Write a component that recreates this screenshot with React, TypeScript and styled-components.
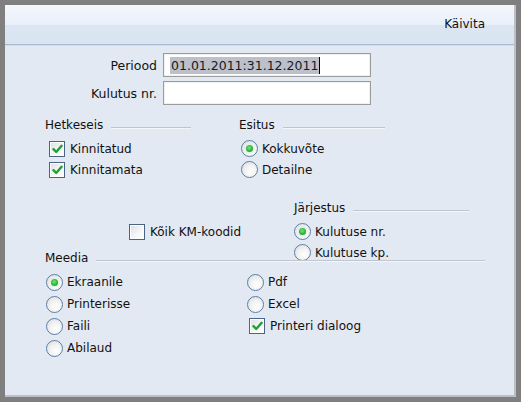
import { createGlobalStyle, styled } from 'styled-components';

const GlobalStyle = createGlobalStyle`
  html, body {
    margin: 0;
    padding: 0;
  }
  body {
    font-family: "DejaVu Sans", "Liberation Sans", sans-serif;
    font-size: 12px;
    color: #111;
  }
`;

const CheckIcon = () => (
  <svg width="11" height="10" viewBox="0 0 11 10">
    <path d="M1.5 5.2 L4.2 8 L9.6 1.8" fill="none" stroke="#1fa22e" strokeWidth="2.4" strokeLinecap="round" strokeLinejoin="round" />
  </svg>
);

interface OptionProps {
  label: string;
  checked?: boolean;
}

const CheckOption = ({ label, checked }: OptionProps) => (
  <OptionRow>
    <CheckBox>{checked && <CheckIcon />}</CheckBox>
    <OptionText $gap={5}>{label}</OptionText>
  </OptionRow>
);

const RadioOption = ({ label, checked }: OptionProps) => (
  <OptionRow>
    <RadioCircle>{checked && <RadioDot />}</RadioCircle>
    <OptionText $gap={4}>{label}</OptionText>
  </OptionRow>
);

interface GroupProps {
  title: string;
  width: number;
  inset?: number;
  children: React.ReactNode;
}

const Group = ({ title, width, inset = 0, children }: GroupProps) => (
  <GroupBox $width={width}>
    <GroupHeading>
      <span>{title}</span>
      <HeadingLine />
    </GroupHeading>
    <GroupItems $inset={inset}>{children}</GroupItems>
  </GroupBox>
);

const App = () => {
  return (
    <>
      <GlobalStyle />
      <Window>
        <Panel>
          <Header>
            <HeaderTitle>Käivita</HeaderTitle>
          </Header>
          <Body>
            <Fields>
              <FieldLabel>Periood</FieldLabel>
              <TextField>
                <Selected>01.01.2011:31.12.2011</Selected>
                <Caret />
              </TextField>
              <FieldLabel>Kulutus nr.</FieldLabel>
              <TextField />
            </Fields>

            <TopGroups>
              <Group title="Hetkeseis" width={146} inset={4}>
                <CheckOption label="Kinnitatud" checked />
                <CheckOption label="Kinnitamata" checked />
              </Group>
              <Group title="Esitus" width={146} inset={2}>
                <RadioOption label="Kokkuvõte" checked />
                <RadioOption label="Detailne" />
              </Group>
            </TopGroups>

            <MiddleRow>
              <SingleCheck>
                <CheckOption label="Kõik KM-koodid" />
              </SingleCheck>
              <Group title="Järjestus" width={175}>
                <RadioOption label="Kulutuse nr." checked />
                <RadioOption label="Kulutuse kp." />
              </Group>
            </MiddleRow>

            <MediaSection>
              <Group title="Meedia" width={440} inset={1}>
                <MediaColumns>
                  <MediaColumn>
                    <RadioOption label="Ekraanile" checked />
                    <RadioOption label="Printerisse" />
                    <RadioOption label="Faili" />
                    <RadioOption label="Abilaud" />
                  </MediaColumn>
                  <MediaColumn>
                    <RadioOption label="Pdf" />
                    <RadioOption label="Excel" />
                    <ShiftedCheck>
                      <CheckOption label="Printeri dialoog" checked />
                    </ShiftedCheck>
                  </MediaColumn>
                </MediaColumns>
              </Group>
            </MediaSection>
          </Body>
        </Panel>
      </Window>
    </>
  );
};

const Window = styled.div`
  width: 521px;
  height: 402px;
  box-sizing: border-box;
  padding: 5px;
  background: #7f7f7f;
  display: flex;
`;

const Panel = styled.div`
  flex: 1;
  display: flex;
  flex-direction: column;
  background: #e3e9f2;
  border-right: 2px solid #bcc0c6;
  border-bottom: 2px solid #bcc0c6;
`;

const Header = styled.div`
  height: 40px;
  display: flex;
  align-items: center;
  justify-content: flex-end;
  padding: 0 29px 2px 0;
  box-sizing: border-box;
  background: linear-gradient(
    to bottom,
    #f3f7fd 0%,
    #e9f0f9 50%,
    #dce6f3 52%,
    #d9e4f2 100%
  );
  border-bottom: 1px solid #aab9cf;
  box-shadow: 0 1px 0 #d2dbe8;
`;

const HeaderTitle = styled.span`
  font-size: 12px;
  color: #111;
`;

const Body = styled.div`
  flex: 1;
  display: flex;
  flex-direction: column;
  padding: 8px 0 0 40px;
`;

const Fields = styled.div`
  display: grid;
  grid-template-columns: 112px 208px;
  column-gap: 6px;
  row-gap: 4px;
  align-items: center;
`;

const FieldLabel = styled.span`
  text-align: right;
  font-size: 12.5px;
`;

const TextField = styled.div`
  height: 24px;
  box-sizing: border-box;
  border: 1px solid #9c9c9c;
  box-shadow: inset 0 0 0 1px #f0f0f0;
  background: #fff;
  display: flex;
  align-items: center;
  padding-left: 6px;
  font-size: 12.5px;
`;

const Selected = styled.span`
  background: #bcc0cb;
  color: #1a1a1a;
  line-height: 17px;
  padding: 0 1px;
`;

const Caret = styled.span`
  width: 1px;
  height: 17px;
  background: #000;
`;

const TopGroups = styled.div`
  display: flex;
  gap: 48px;
  margin-top: 12px;
`;

const GroupBox = styled.div<{ $width: number }>`
  width: ${({ $width }) => $width}px;
  display: flex;
  flex-direction: column;
`;

const GroupHeading = styled.div`
  height: 16px;
  display: flex;
  align-items: center;
  gap: 8px;
`;

const HeadingLine = styled.div`
  flex: 1;
  height: 1px;
  margin-top: 4px;
  background: #bfc5ce;
  box-shadow: 0 1px 0 #f2f5f9;
`;

const GroupItems = styled.div<{ $inset: number }>`
  display: flex;
  flex-direction: column;
  margin-top: 5px;
  padding-left: ${({ $inset }) => $inset}px;
`;

const OptionRow = styled.div`
  height: 21px;
  display: flex;
  align-items: center;
`;

const OptionText = styled.span<{ $gap: number }>`
  margin-left: ${({ $gap }) => $gap}px;
  white-space: nowrap;
`;

const CheckBox = styled.div`
  width: 16px;
  height: 16px;
  box-sizing: border-box;
  border: 1px solid #4a6485;
  background: linear-gradient(135deg, #dcdfe4 0%, #f6f7f8 60%, #ffffff 100%);
  box-shadow: inset 0 0 0 1px #fdfdfd;
  display: flex;
  align-items: center;
  justify-content: center;
`;

const RadioCircle = styled.div`
  width: 17px;
  height: 17px;
  box-sizing: border-box;
  border-radius: 50%;
  border: 1px solid #5a7ea6;
  background: radial-gradient(circle at 60% 65%, #ffffff 0%, #f2f2f2 45%, #d6d8dc 100%);
  display: flex;
  align-items: center;
  justify-content: center;
`;

const RadioDot = styled.div`
  width: 7px;
  height: 7px;
  border-radius: 50%;
  background: radial-gradient(circle at 45% 40%, #7de07f 0%, #25b233 60%, #1a8f27 100%);
  box-shadow: 0 0 2px 1px #d6efd6;
`;

const MiddleRow = styled.div`
  display: grid;
  grid-template-columns: 249px 175px;
  margin-top: 20px;
`;

const SingleCheck = styled.div`
  padding: 21px 0 0 84px;
`;

const MediaSection = styled.div`
  margin-top: -13px;
`;

const MediaColumns = styled.div`
  display: grid;
  grid-template-columns: 201px auto;
`;

const MediaColumn = styled.div`
  display: flex;
  flex-direction: column;
  & > ${OptionRow} {
    height: 22px;
  }
`;

const ShiftedCheck = styled.div`
  padding-left: 2px;
  & > ${OptionRow} {
    height: 22px;
  }
`;

export default App;
